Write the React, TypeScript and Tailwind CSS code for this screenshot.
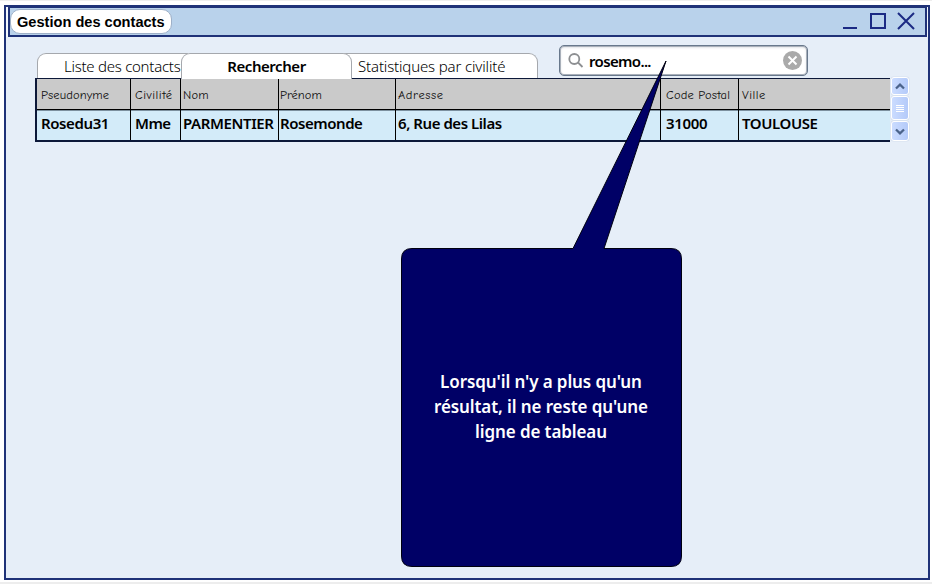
const COLUMNS = [
  { label: 'Pseudonyme', value: 'Rosedu31', box: 'w-[93px] pl-[4px]', head: 'tracking-[0.1px]', cell: 'tracking-[-0.4px]' },
  { label: 'Civilité', value: 'Mme', box: 'w-[50px] pl-[4px]', head: 'tracking-[0.5px]', cell: 'tracking-[-0.5px]' },
  { label: 'Nom', value: 'PARMENTIER', box: 'w-[98px] pl-[2px]', head: 'tracking-[0.2px]', cell: 'tracking-[-0.4px]' },
  { label: 'Prénom', value: 'Rosemonde', box: 'w-[117px] pl-[1px]', head: 'tracking-[0px]', cell: 'tracking-[-0.45px]' },
  { label: 'Adresse', value: '6, Rue des Lilas', box: 'w-[265px] pl-[2px]', head: 'tracking-[0.6px]', cell: 'tracking-[-0.45px]' },
  { label: 'Code Postal', value: '31000', box: 'w-[78px] pl-[5px]', head: 'tracking-[0.2px]', cell: 'tracking-[-0.3px]' },
  { label: 'Ville', value: 'TOULOUSE', box: 'w-[151px] pl-[3px]', head: 'tracking-[0.5px]', cell: 'tracking-[-0.4px]' },
];

const SANS = "font-['Noto_Sans','Open_Sans',sans-serif]";

function TitleBar() {
  return (
    <div className="h-[30px] bg-[#f3f8fd] pl-[2px] pr-[1px]">
      <div className="flex h-[30px] items-start justify-between border-2 border-t border-[#1f3278] bg-[#b9d2eb]">
        <div className="mt-[1px] flex h-[25px] w-[162px] items-center whitespace-nowrap rounded-[10px] border border-[#9eb0c8] bg-white pl-[6px] pt-[2px] font-['Liberation_Sans',Arial,sans-serif] text-[14.6px] font-bold text-black">
          Gestion des contacts
        </div>
        <svg className="mt-[3px] mr-[9px]" width="74" height="20" viewBox="0 0 74 20" fill="none" stroke="#1b2a84" strokeWidth="2">
          <path d="M1 17H15" />
          <path d="M29 3H43V17H29Z" />
          <path d="M56 2L72 18M72 2L56 18" />
        </svg>
      </div>
    </div>
  );
}

function Tabs() {
  const base = 'h-[26px] border border-b-0 border-[#a5a8ad] bg-white whitespace-nowrap text-[15px] leading-[24px]';
  return (
    <div className={`mt-[16px] flex h-[25px] ${SANS}`}>
      <div className={`${base} w-[151px] rounded-tl-[9px] pl-[26px] font-light tracking-[-0.26px] text-black`}>Liste des contacts</div>
      <div className={`${base} relative z-10 -ml-[7px] w-[171px] rounded-t-[9px] text-center font-semibold tracking-[-0.45px] text-black`}>Rechercher</div>
      <div className={`${base} -ml-[8px] w-[194px] rounded-tr-[9px] pl-[13px] font-light tracking-[-0.15px] text-black`}>Statistiques par civilité</div>
    </div>
  );
}

function SearchField() {
  return (
    <div className="mt-[8px] ml-[21px] flex h-[31px] w-[249px] items-center rounded-[5px] border-[1.5px] border-[#68788c] bg-white pl-[7px] pr-[4px] shadow-[inset_0_0_0_1px_#a9b0ba,inset_0_1px_3px_#c5cad2]">
      <svg width="18" height="18" viewBox="0 0 18 18" fill="none" stroke="#8d8f92" strokeWidth="1.8">
        <circle cx="7.3" cy="7" r="5" />
        <path d="M11 10.5L15.500 15" />
      </svg>
      <span className={`ml-[4px] mt-[1px] flex-1 text-[15px] font-semibold tracking-[-0.65px] text-black ${SANS}`}>rosemo...</span>
      <svg width="20" height="20" viewBox="0 0 20 20">
        <circle cx="9.5" cy="9.500" r="9.5" fill="#aaa" />
        <path d="M5.500 5.500L13.500 13.500M13.500 5.500L5.500 13.500" stroke="#fff" strokeWidth="2" />
      </svg>
    </div>
  );
}

function ContactsTable() {
  return (
    <div className="h-[64px] w-[855px] border-t border-b-2 border-l-2 border-[#0c1839]">
      <div className="flex h-[61px] w-[853px]">
        {COLUMNS.map((c, i) => (
          <div key={c.label} className={`${c.box} ${i === 0 ? 'w-[94px] pl-[4px]' : ''} flex flex-none flex-col whitespace-nowrap ${i < 6 ? 'border-r border-black' : ''} bg-[linear-gradient(#cacaca_30px,#000_30px,#000_31px,#7c909f_31px,#7c909f_32px,#d3ebf9_32px)]`}>
            <div className={`h-[30px] font-['Comic_Neue','Open_Sans',sans-serif] text-[12.5px] leading-[33px] text-[#111] ${c.head}`}>{c.label}</div>
            <div className={`h-[29px] text-[15px] font-semibold leading-[29px] text-black ${SANS} ${c.cell}`}>{c.value}</div>
          </div>
        ))}
      </div>
    </div>
  );
}

function Scrollbar() {
  const part = 'flex items-center justify-center rounded-[3px] border border-white bg-gradient-to-r from-[#cbdcff] to-[#b4caf9] shadow-[0_0_1px_#96a9ce]';
  return (
    <div className="-mt-[1px] ml-[1px] flex w-[18px] flex-col gap-[1px]">
      <div className={`${part} h-[18px]`}>
        <svg width="10" height="7" viewBox="0 0 10 7" fill="none" stroke="#4b638b" strokeWidth="2.3"><path d="M1 5.500L5 1.700L9 5.500" /></svg>
      </div>
      <div className={`${part} h-[24px]`}>
        <div className="flex w-[8px] flex-col gap-[1px]">
          <i className="h-px bg-white" />
          <i className="h-px bg-white" />
          <i className="h-px bg-white" />
          <i className="h-px bg-white" />
        </div>
      </div>
      <div className={`${part} h-[20px]`}>
        <svg width="10" height="7" viewBox="0 0 10 7" fill="none" stroke="#4b638b" strokeWidth="2.3"><path d="M1 1.500L5 5.300L9 1.500" /></svg>
      </div>
    </div>
  );
}

function Callout() {
  return (
    <div className="absolute top-[59px] left-[401px] z-20 h-[507px] w-[281px]">
      <svg className="absolute top-0 left-0" width="281" height="507" viewBox="0 0 281 507">
        <path d="M172 188.5L265 1L203 188.5H270Q280.500 188.500 280.500 199V496Q280.500 506.500 270 506.500H11Q0.500 506.500 0.500 496V199Q0.500 188.500 11 188.500Z" fill="#000066" stroke="#000010" />
      </svg>
      <p className={`relative -ml-[1px] mt-[309px] text-center text-[17px] font-semibold leading-[25px] tracking-[-0.1px] text-white ${SANS}`}>
        Lorsqu'il n'y a plus qu'un
        <br />
        résultat, il ne reste qu'une
        <br />
        ligne de tableau
      </p>
    </div>
  );
}

export default function App() {
  return (
    <div className="relative h-[584px] w-[932px] overflow-hidden border-t border-b-2 border-t-[#eeeeee] border-b-[#ededed] bg-white pt-[4px] pl-[4px]">
      <div className="h-[575px] w-[926px] border-2 border-[#1f3278] bg-[#e6eef8]">
        <TitleBar />
        <div className="pl-[29px]">
          <div className="flex h-[41px]">
            <div className="pl-[2px]"><Tabs /></div>
            <SearchField />
          </div>
          <div className="flex">
            <ContactsTable />
            <Scrollbar />
          </div>
        </div>
      </div>
      <Callout />
    </div>
  );
}
